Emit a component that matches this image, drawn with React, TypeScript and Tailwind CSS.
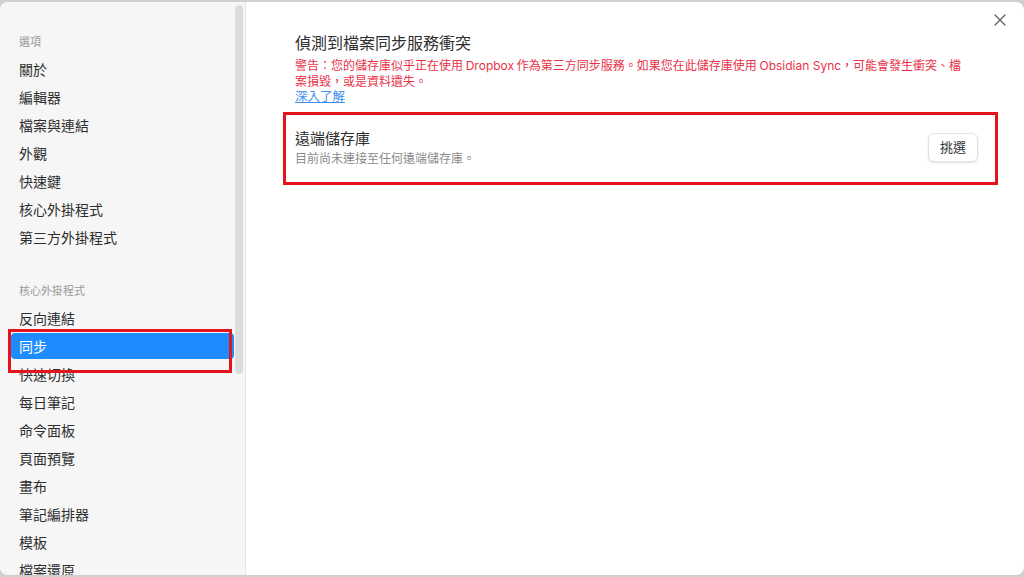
import React from "react";

const font = { fontFamily: '"Noto Sans CJK TC", "Noto Sans CJK JP", sans-serif' };
const latin = { fontFamily: '"Inter", "Noto Sans CJK TC", sans-serif' };

function Item({ label, active }: { label: string; active?: boolean }) {
  return (
    <div className="flex h-[28px] shrink-0 items-center px-[11px]">
      <div
        className={
          "flex h-[26px] w-full items-center rounded-[4px] px-[8px] text-[14px] " +
          (active ? "bg-[#1e8cff] text-white" : "text-[#2e2e2e]")
        }
      >
        {label}
      </div>
    </div>
  );
}

export default function App() {
  const group1 = ["關於", "編輯器", "檔案與連結", "外觀", "快速鍵", "核心外掛程式", "第三方外掛程式"];
  const group2 = ["反向連結", "同步", "快速切換", "每日筆記", "命令面板", "頁面預覽", "畫布", "筆記編排器", "模板", "檔案還原"];
  return (
    <div lang="zh-Hant-TW" className="h-[577px] w-[1024px] overflow-hidden bg-[#cfcfcf] py-[2px]" style={font}>
      <div className="relative flex h-[573px] overflow-hidden rounded-[8px] bg-white">
        {/* Sidebar */}
        <div className="relative flex w-[246px] shrink-0 flex-col overflow-hidden border-r border-[#e6e6e6] bg-[#f6f6f6] pt-[30px]">
          <div className="mb-[5px] shrink-0 px-[19px] text-[11px] leading-[18px] text-[#9a9a9a]">選項</div>
          {group1.map((g) => (
            <Item key={g} label={g} />
          ))}
          <div className="h-[30px] shrink-0" />
          <div className="mb-[5px] shrink-0 px-[19px] text-[11px] leading-[18px] text-[#9a9a9a]">核心外掛程式</div>
          {group2.map((g) => (
            <Item key={g} label={g} active={g === "同步"} />
          ))}
          {/* scrollbar */}
          <div className="absolute left-[235px] top-[3px] h-[369px] w-[8px] rounded-full bg-[#dcdcdc]" />
        </div>

        {/* Main */}
        <div className="relative flex-1 pl-[49px] pr-[46px] pt-[28px]">
          <div className="text-[16px] leading-[24px] text-[#2e2e2e]">偵測到檔案同步服務衝突</div>
          <div className="mt-[3px] w-[672px] text-[12px] leading-[15px] text-[#e93147]">
            警告：您的儲存庫似乎正在使用 <span style={latin}>Dropbox</span> 作為第三方同步服務。如果您在此儲存庫使用{" "}
            <span style={latin}>Obsidian Sync</span>，可能會發生衝突、檔案損毀，或是資料遺失。
          </div>
          <div className="text-[12.5px] leading-[16px] text-[#3b8ef0] underline">深入了解</div>
          <div className="mt-[8px] flex items-center justify-between border-t border-[#e8e8e8] pb-[16px] pt-[14px]">
            <div>
              <div className="text-[15px] leading-[22px] text-[#2e2e2e]">遠端儲存庫</div>
              <div className="text-[12px] leading-[18px] text-[#8a8a8a]">目前尚未連接至任何遠端儲存庫。</div>
            </div>
            <button className="h-[29px] w-[50px] rounded-[6px] border border-[#e2e2e2] bg-white text-[13px] text-[#333] shadow-[0_1px_2px_rgba(0,0,0,0.12)]">
              挑選
            </button>
          </div>
          {/* close */}
          <div className="absolute right-[17px] top-[11px] text-[#666]">
            <svg width="14" height="14" viewBox="0 0 14 14" fill="none" stroke="currentColor" strokeWidth="1.4" strokeLinecap="round">
              <path d="M2 2L12 12M12 2L2 12" />
            </svg>
          </div>
        </div>

        {/* red annotations */}
        <div className="pointer-events-none absolute left-[8px] top-[327px] h-[44px] w-[224px] border-[3px] border-[#e3141d]" />
        <div className="pointer-events-none absolute left-[283px] top-[110px] h-[73px] w-[715px] border-[3px] border-[#e3141d]" />
      </div>
    </div>
  );
}
